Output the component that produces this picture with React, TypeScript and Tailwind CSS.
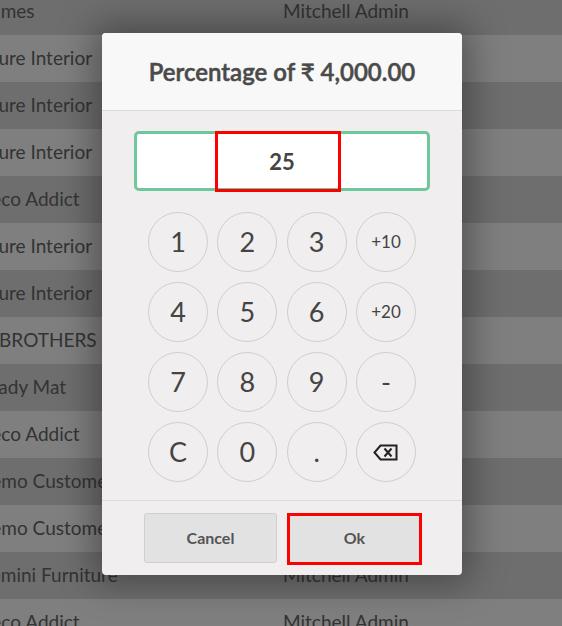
const rows = [
  { name: "Names", owner: "Mitchell Admin" },
  { name: "Azure Interior", owner: "Mitchell Admin" },
  { name: "Azure Interior", owner: "Mitchell Admin" },
  { name: "Azure Interior", owner: "Mitchell Admin" },
  { name: "Deco Addict", owner: "Mitchell Admin" },
  { name: "Azure Interior", owner: "Mitchell Admin" },
  { name: "Azure Interior", owner: "Mitchell Admin" },
  { name: "JL BROTHERS", owner: "Mitchell Admin" },
  { name: "Ready Mat", owner: "Mitchell Admin" },
  { name: "Deco Addict", owner: "Mitchell Admin" },
  { name: "Demo Customer", owner: "Mitchell Admin" },
  { name: "Demo Customer", owner: "Mitchell Admin" },
  { name: "Gemini Furniture", owner: "Mitchell Admin" },
  { name: "Deco Addict", owner: "Mitchell Admin" },
];

const keys = ["1", "2", "3", "+10", "4", "5", "6", "+20", "7", "8", "9", "-", "C", "0", ".", "back"];

function BackspaceIcon() {
  return (
    <svg width="25" height="17" viewBox="0 0 25 17" fill="none" stroke="#222" strokeWidth="2">
      <path d="M7.5 1.5H23.5V15.5H7.5L1.5 8.5Z" strokeLinejoin="miter" />
      <path d="M11.5 4.5L18.5 12.5M18.5 4.5L11.5 12.5" />
    </svg>
  );
}

export default function App() {
  return (
    <div className="relative w-[562px] h-[626px] overflow-hidden bg-[#6e6e6e] font-['Lato','Open_Sans',sans-serif]">
      <div className="-mt-[12px]">
        {rows.map((row, i) => (
          <div
            key={i}
            className={`flex items-center h-[47px] text-[19px] text-[#333] ${i % 2 === 0 ? "bg-[#6e6e6e]" : "bg-[#7f7f7f]"}`}
          >
            <div className="w-[306px] shrink-0 -ml-[23px] whitespace-nowrap">{row.name}</div>
            <div className="whitespace-nowrap">{row.owner}</div>
          </div>
        ))}
      </div>

      <div className="absolute left-[102px] top-[33px] w-[360px] rounded-[4px] bg-[#f0eeef] shadow-[0_0_36px_8px_rgba(0,0,0,0.35)]">
        <div className="h-[78px] flex items-center justify-center bg-[#f8f8f8] border-b border-[#dcdcdc] rounded-t-[4px]">
          <h2 className="text-[24px] font-semibold text-[#4a4a4a] [-webkit-text-stroke:0.5px_#4a4a4a]">
            Percentage of ₹ 4,000.00
          </h2>
        </div>

        <div className="px-[32px] pt-[20px] pb-[18px]">
          <div className="relative h-[60px] flex items-center justify-center bg-white border-[3px] border-[#6ec89b] rounded-[5px]">
            <span className="text-[22px] font-bold text-[#444]">25</span>
            <div className="absolute left-[78px] -top-[3px] w-[126px] h-[61px] border-[3px] border-[#ff0000]" />
          </div>

          <div className="mt-[21px] grid grid-cols-[repeat(4,60px)] gap-x-[9.33px] gap-y-[10px] justify-center">
            {keys.map((k) => (
              <button
                key={k}
                className={`w-[60px] h-[60px] rounded-full border border-[#cfcfcf] flex items-center justify-center text-[#444] ${k.startsWith("+") ? "text-[17px]" : "text-[27px]"}`}
              >
                {k === "back" ? <BackspaceIcon /> : k}
              </button>
            ))}
          </div>
        </div>

        <div className="border-t border-[#dcdcdc] pt-[12px] pb-[10px] pl-[2px] flex justify-center items-start gap-[10px]">
          <button className="w-[133px] h-[50px] bg-[#e2e2e2] border border-[#cfcfcf] rounded-[3px] text-[16px] font-bold text-[#555]">
            Cancel
          </button>
          <button className="w-[135px] h-[52px] pb-[3px] bg-[#e2e2e2] border-[3px] border-[#ff0000] text-[16px] font-bold text-[#555]">
            Ok
          </button>
        </div>
      </div>
    </div>
  );
}
